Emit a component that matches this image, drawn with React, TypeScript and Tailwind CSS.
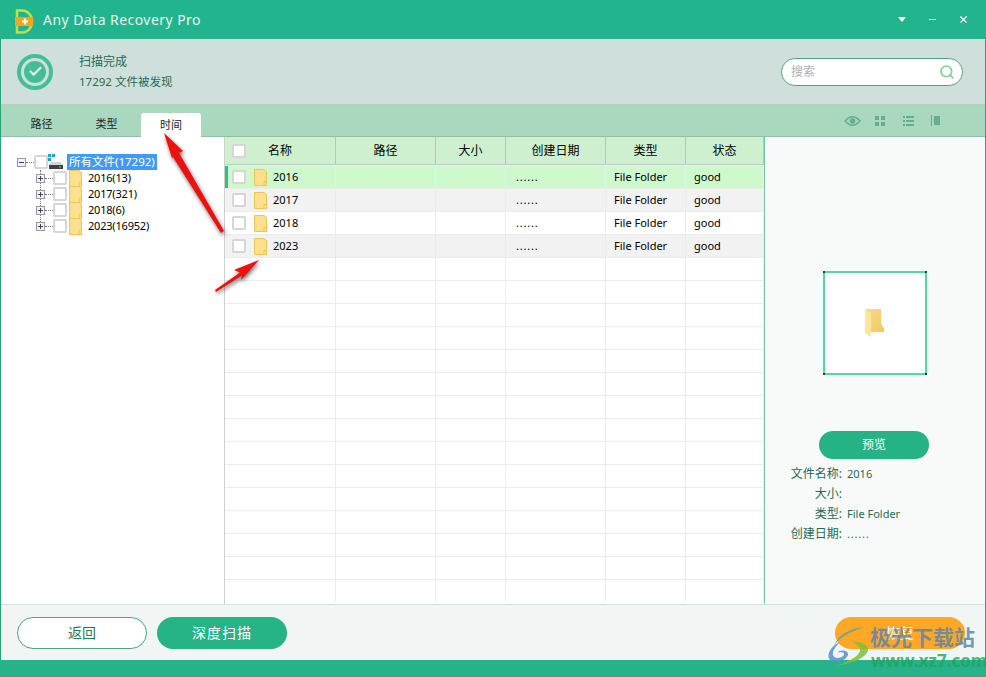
import { Search, Minus, X, Check } from "lucide-react";

const font = "font-['Noto_Sans','Noto_Sans_CJK_SC',sans-serif]";

const columns = [
  { label: "路径", w: "w-[100px]" },
  { label: "大小", w: "w-[70px]" },
  { label: "创建日期", w: "w-[100px]" },
  { label: "类型", w: "w-[80px]" },
  { label: "状态", w: "w-[78px]" },
];

const files = ["2016", "2017", "2018", "2023"];
const tree = ["2016(13)", "2017(321)", "2018(6)", "2023(16952)"];

const Box = () => (
  <div className="w-[14px] h-[14px] shrink-0 rounded-[2px] bg-white border-2 border-[#d6d6d6]" />
);

const FolderIcon = () => (
  <svg width="13" height="17" viewBox="0 0 13 17" className="shrink-0">
    <path d="M.5.5h9.500l2.500 2v14H.5z" fill="#fde08f" stroke="#efc64f" />
    <path d="M10 12.500h2.500v4H10z" fill="#fde08f" stroke="#efc64f" />
  </svg>
);

const PlusBox = ({ minus }: { minus?: boolean }) => (
  <div className="w-[9px] h-[9px] shrink-0 border border-[#9a9a9a] bg-[#f2f2f2] flex items-center justify-center relative">
    <div className="w-[5px] h-px bg-[#30437a]" />
    {!minus && <div className="absolute w-px h-[5px] bg-[#30437a]" />}
  </div>
);

const Logo = () => (
  <svg width="19" height="25" viewBox="0 0 19 25" className="mt-[3px] shrink-0">
    <path d="M2 1.500h5c6 0 10 5 10 11s-4 11-10 11H2z" fill="none" stroke="#bfe146" strokeWidth="2.500" />
    <path d="M0 8h18v9H0z" fill="#f7a32b" />
    <path d="M10 9.500v6M7 12.500h6" stroke="#fff" strokeWidth="1.800" />
  </svg>
);

const DriveIcon = () => (
  <svg width="16" height="16" viewBox="0 0 16 16" className="shrink-0">
    <path d="M0 0h3v3H0zM4 0h3v3H4zM0 4h3v3H0z" fill="#1e9fe8" />
    <path d="M3 8h10l2 3H1z" fill="#d3d6d8" />
    <path d="M1 11h14v4H1z" fill="#3c4146" />
    <path d="M11 12.500h2v1h-2z" fill="#63d36b" />
  </svg>
);

const ViewIcons = () => (
  <div className="ml-auto self-center flex items-center text-[#66ad8e]">
    <svg width="17" height="10" viewBox="0 0 17 10">
      <path fillRule="evenodd" fill="currentColor" d="M0 5C3 1.500 5.500 0 8.500 0S14 1.500 17 5c-3 3.500-5.500 5-8.500 5S3 8.500 0 5zm2 0c2.200 2.300 4.300 3.500 6.500 3.500S12.800 7.300 15 5c-2.200-2.300-4.300-3.500-6.500-3.500S4.200 2.700 2 5z" />
      <circle cx="8.500" cy="5" r="2.800" fill="currentColor" />
    </svg>
    <svg width="10" height="10" viewBox="0 0 10 10" fill="currentColor" className="ml-[14px]">
      <path d="M0 0h4v4H0zM6 0h4v4H6zM0 6h4v4H0zM6 6h4v4H6z" />
    </svg>
    <svg width="11" height="10" viewBox="0 0 11 10" fill="currentColor" className="ml-[18px]">
      <path d="M0 0h2v2H0zM3 0h8v2H3zM0 4h2v2H0zM3 4h8v2H3zM0 8h2v2H0zM3 8h8v2H3z" />
    </svg>
    <svg width="9" height="11" viewBox="0 0 9 11" fill="currentColor" className="ml-[17px]">
      <path d="M0 0h1v11H0zM3 1h6v9H3z" />
    </svg>
  </div>
);

const App = () => {
  return (
    <div className={`${font} relative w-[986px] h-[677px] overflow-hidden flex flex-col bg-white`}>
      {/* Title bar */}
      <div className="h-[39px] shrink-0 bg-[#22b48c] flex items-center pl-[15px]">
        <Logo />
        <span className="ml-[9px] text-[14px] text-[#e4f6ef] tracking-[0.45px]">Any Data Recovery Pro</span>
        <div className="ml-auto flex items-center text-white">
          <div className="w-0 h-0 border-x-[4.5px] border-x-transparent border-t-[5px] border-t-white" />
          <Minus className="w-[11px] h-[11px] ml-[21px]" strokeWidth={2} />
          <X className="w-[11px] h-[11px] ml-[20px] mr-[17px]" strokeWidth={2.5} />
        </div>
      </div>

      <div className="flex-1 min-h-0 flex flex-col border-x border-[#26a37c]">
        {/* Status header */}
        <div className="h-[66px] shrink-0 bg-[#cfe0dc] flex items-center pl-[16px] pr-[22px] border-b border-[#b6cdc4]">
          <div className="w-9 h-9 rounded-full border-[4px] border-[#45bd97] flex items-center justify-center">
            <div className="w-[22px] h-[22px] rounded-full bg-[#45bd97] flex items-center justify-center">
              <Check className="w-[15px] h-[15px] text-[#e3f1ec]" strokeWidth={3.5} />
            </div>
          </div>
          <div className="ml-[26px] text-[#1f6a50]">
            <div className="text-[12px] leading-[17px]">扫描完成</div>
            <div className="text-[11.500px] leading-[17px] mt-[3px]">17292 文件被发现</div>
          </div>
          <div className="ml-auto mt-[1px] w-[182px] h-[28px] rounded-full bg-white border border-[#55a583] flex items-center pl-[9px] pr-[7px]">
            <span className="text-[12px] text-[#b0b0b0]">搜索</span>
            <Search className="ml-auto w-[16px] h-[16px] text-[#86cf9c]" strokeWidth={2.5} />
          </div>
        </div>

        {/* Tabs */}
        <div className="h-[32px] shrink-0 bg-[#a9d8bf] flex items-end pl-[8px] pr-[45px] border-b border-[#8fbfa8]">
          <div className="w-[65px] h-[24px] flex items-center justify-center text-[11px] text-[#222]">路径</div>
          <div className="w-[65px] h-[24px] flex items-center justify-center text-[11px] text-[#222]">类型</div>
          <div className="ml-[2px] w-[60px] h-[24px] -mb-px bg-white rounded-t-[3px] flex items-center justify-center text-[11px] text-[#222]">时间</div>
          <ViewIcons />
        </div>

        {/* Main */}
        <div className="flex-1 min-h-0 flex">
          {/* Tree */}
          <div className="relative w-[224px] shrink-0 border-r border-[#cfcfcf] pt-[17px] pl-[16px] text-[11px] text-black">
            <div className="absolute left-[39px] top-[33px] h-[52px] border-l border-dotted border-[#777]" />
            <div className="relative flex items-center h-[16px]">
              <PlusBox minus />
              <div className="w-[8px] border-t border-dotted border-[#777]" />
              <Box />
              <DriveIcon />
              <span className="ml-[3px] bg-[#3f9bf5] text-white px-[2px] leading-[16px] text-[11.500px]">所有文件(17292)</span>
            </div>
            {tree.map((t) => (
              <div key={t} className="relative flex items-center h-[16px] pl-[19px]">
                <PlusBox />
                <div className="w-[8px] border-t border-dotted border-[#777]" />
                <Box />
                <div className="ml-[2px]"><FolderIcon /></div>
                <span className="ml-[6px] tracking-[-0.2px]">{t}</span>
              </div>
            ))}
          </div>

          {/* Table */}
          <div className="w-[540px] shrink-0 flex flex-col border-r border-[#7cc4a8]">
            <div className="h-[28px] shrink-0 bg-[#cef0cf] border-b border-[#b4cfbd] flex text-[12px] text-black">
              <div className="w-[111px] shrink-0 border-r border-[#b4c9bc] flex items-center pl-[7px]">
                <Box />
                <span className="ml-[22px]">名称</span>
              </div>
              {columns.map((c) => (
                <div key={c.label} className={`${c.w} shrink-0 border-r border-[#b4c9bc] flex items-center justify-center`}>
                  {c.label}
                </div>
              ))}
            </div>
            {Array.from({ length: 19 }).map((_, i) => {
              const name = files[i];
              const bg = i === 0 ? "bg-[#cdf9cd]" : i === 1 || i === 3 ? "bg-[#f2f2f2]" : "bg-white";
              return (
                <div key={i} className={`h-[23px] shrink-0 flex text-[11px] text-black border-t border-[#ececec] ${bg}`}>
                  <div className="w-[111px] shrink-0 border-r border-[#ececec] flex items-center pl-[7px] relative">
                    {i === 0 && <div className="absolute left-0 top-0 bottom-0 w-[3px] bg-[#2cc184]" />}
                    {name && (
                      <>
                        <Box />
                        <div className="ml-[8px]"><FolderIcon /></div>
                        <span className="ml-[6px]">{name}</span>
                      </>
                    )}
                  </div>
                  <div className="w-[100px] shrink-0 border-r border-[#ececec]" />
                  <div className="w-[70px] shrink-0 border-r border-[#ececec]" />
                  <div className="w-[100px] shrink-0 border-r border-[#ececec] flex items-center pl-[10px] tracking-[0.8px]">{name && "......"}</div>
                  <div className="w-[80px] shrink-0 border-r border-[#ececec] flex items-center pl-[8px]">{name && "File Folder"}</div>
                  <div className="w-[78px] shrink-0 border-r border-[#ececec] flex items-center pl-[8px]">{name && "good"}</div>
                </div>
              );
            })}
          </div>

          {/* Preview */}
          <div className="flex-1 bg-[#f8fafa] flex flex-col items-center pt-[134px] pr-[2px] text-[#1f6a50]">
            <div className="relative ml-[2px] w-[104px] h-[104px] border-2 border-[#55d6a8] bg-white flex items-center justify-center">
              <div className="absolute -left-[2px] -top-[2px] w-[2px] h-[2px] bg-[#333]" />
              <div className="absolute -right-[2px] -top-[2px] w-[2px] h-[2px] bg-[#333]" />
              <div className="absolute -left-[2px] -bottom-[2px] w-[2px] h-[2px] bg-[#333]" />
              <div className="absolute -right-[2px] -bottom-[2px] w-[2px] h-[2px] bg-[#333]" />
              <svg width="20" height="28" viewBox="0 0 20 28" className="mt-[-1px]">
                <defs>
                  <linearGradient id="folderBack" x1="0" y1="0" x2="1" y2="1">
                    <stop offset="0" stopColor="#f9dd8a" />
                    <stop offset="1" stopColor="#f0c95f" />
                  </linearGradient>
                </defs>
                <path d="M1 0h15v14l3 6v3H6z" fill="url(#folderBack)" />
                <path d="M0 0l6 4v24l-6-4z" fill="#fde59c" />
              </svg>
            </div>
            <div className="mt-[56px] w-[110px] h-[28px] rounded-full bg-[#25b385] flex items-center justify-center text-[12px] text-white">预览</div>
            <div className="self-start ml-[23px] mt-[5px] text-[12px] grid grid-cols-[54px_auto] gap-x-[5px] leading-[20px]">
              <span className="text-right whitespace-nowrap">文件名称:</span><span className="text-[11px]">2016</span>
              <span className="text-right">大小:</span><span />
              <span className="text-right">类型:</span><span className="text-[11px]">File Folder</span>
              <span className="text-right whitespace-nowrap">创建日期:</span><span className="text-[11px] tracking-[0.8px]">......</span>
            </div>
          </div>
        </div>

        {/* Footer */}
        <div className="h-[56px] shrink-0 bg-[#f1f5f4] border-t border-[#cbe5da] flex items-center pl-[16px] pr-[20px] text-[14px]">
          <div className="w-[130px] h-[32px] rounded-full bg-white border border-[#4da586] text-[#1f7a5c] flex items-center justify-center">返回</div>
          <div className="ml-[10px] w-[130px] h-[32px] rounded-full bg-[#26b385] text-white flex items-center justify-center tracking-[1px]">深度扫描</div>
          <div className="ml-auto w-[130px] h-[32px] rounded-full bg-[#ffa726] text-white flex items-center justify-center">恢复</div>
        </div>
      </div>

      {/* Bottom bar */}
      <div className="h-[17px] shrink-0 bg-[#26b38a]" />

      {/* Annotation arrows */}
      <svg className="absolute left-0 top-0 pointer-events-none drop-shadow-[1px_2px_2px_rgba(0,0,0,0.6)]" width="986" height="677" viewBox="0 0 986 677">
        <path d="M164 133 L183 151 L179 153 L224 231 L221 233 L173 157 L172 158 Z" fill="#ee0f0f" />
        <path d="M259 260 L234 270 L240 272.500 L215 290 L216 292 L242 275.500 L241 280 Z" fill="#ee0f0f" />
      </svg>

      {/* Watermark */}
      <div className="absolute left-[826px] top-[622px] w-[160px] h-[55px] pointer-events-none">
        <svg className="absolute left-0 top-0" width="44" height="46" viewBox="0 0 44 46">
          <path d="M38 5C26 6 12 12 8 24 12 16 24 10 38 5z" fill="#6aa38f" opacity="0.9" />
          <path d="M14 20C4 24 0 34 4 38c6 4 18 0 18-6 0-4-8-5-11-1 3-2 8-1 7 2-3 4-10 4-11 0-1-4 3-9 7-13z" fill="#5c97d3" opacity="0.9" />
          <path d="M26 20c6-1 16 2 16 7 0 9-18 15-32 17 12-4 24-10 24-16 0-4-4-7-8-8z" fill="#7dbf3a" opacity="0.85" />
        </svg>
        <div className="absolute left-[44px] top-[1px] text-[21px] leading-[28px] font-bold text-[#5d86a8]/85 whitespace-nowrap">极光下载站</div>
        <div className="absolute left-[45px] top-[30px] text-[17px] leading-[18px] font-bold text-[#1fa35f]/80 whitespace-nowrap">www.xz7.com</div>
      </div>
    </div>
  );
};

export default App;
